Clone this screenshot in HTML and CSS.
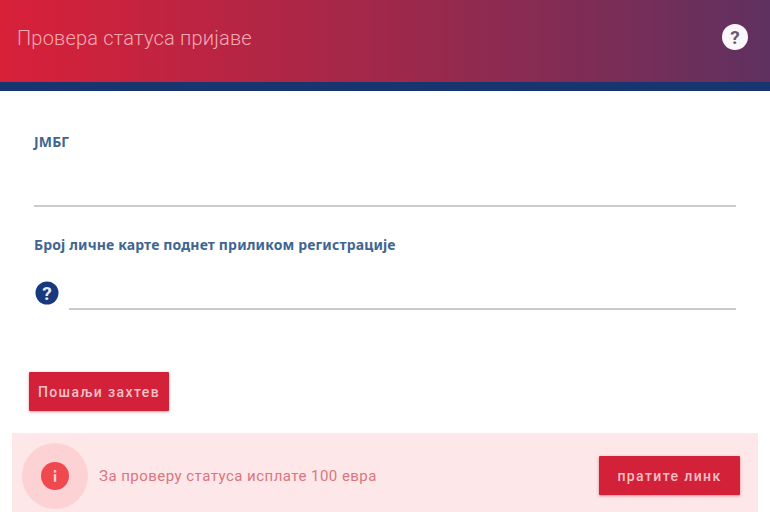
FILE: index.html
```html
<!DOCTYPE html>
<html lang="sr">
<head>
  <meta charset="UTF-8" />
  <meta name="viewport" content="width=device-width, initial-scale=1.0"/>
  <title>Провера статуса пријаве</title>
  <link rel="stylesheet" href="styles.css">
</head>
<body>

  <header class="topbar">
    <h1 class="topbar-title">Провера статуса пријаве</h1>
    <svg class="help-light" viewBox="0 0 26 26" aria-hidden="true">
      <circle cx="13" cy="13" r="13" fill="#fbf6fa"/>
      <text x="13" y="19.5" text-anchor="middle" class="help-mark" fill="#6b5a6c">?</text>
    </svg>
  </header>

  <main class="form">
    <div class="field field-jmbg">
      <label class="field-label">ЈМБГ</label>
      <div class="field-line"></div>
    </div>

    <div class="field field-card">
      <label class="field-label">Број личне карте поднет приликом регистрације</label>
      <div class="field-row">
        <svg class="help-dark" viewBox="0 0 24 24" aria-hidden="true">
          <circle cx="12" cy="12" r="11.5" fill="#17397f"/>
          <text x="12" y="18.5" text-anchor="middle" class="help-mark-small" fill="#e8edf6">?</text>
        </svg>
        <div class="field-line"></div>
      </div>
    </div>

    <button class="btn btn-submit">Пошаљи захтев</button>
  </main>

  <section class="notice">
    <div class="notice-icon">
      <div class="notice-dot">
        <svg viewBox="0 0 28 28" aria-hidden="true">
          <rect x="12.8" y="8" width="2.4" height="2.6" fill="#fbd0d0"/>
          <rect x="12.8" y="12.2" width="2.4" height="7.6" fill="#fbd0d0"/>
        </svg>
      </div>
    </div>
    <p class="notice-text">За проверу статуса исплате 100 евра</p>
    <button class="btn btn-link">пратите линк</button>
  </section>

</body>
</html>
```

FILE: styles.css
```css
:root {
  --red: #d3213a;
  --navy: #17397f;
  --label: #3f6690;
  --line: #cbcbcb;
}

html, body {
  margin: 0;
  height: 100%;
  overflow: hidden;
  background: #fff;
  font-family: Roboto, 'Noto Sans', sans-serif;
}

.topbar {
  height: 82px;
  border-bottom: 9px solid #17356f;
  padding: 0 22px 0 17px;
  display: flex;
  align-items: center;
  justify-content: space-between;
  background: linear-gradient(90deg, #d92039 0%, #a0284a 50%, #5f3160 100%);
}

.topbar-title {
  margin: 0 0 7px;
  font-size: 20px;
  font-weight: 300;
  letter-spacing: 0.2px;
  color: #f7a9b2;
}

.help-light {
  width: 26px;
  height: 26px;
  margin-bottom: 9px;
}

.help-mark {
  font: 700 19px Roboto, sans-serif;
}

.help-mark-small {
  font: 700 19px Roboto, sans-serif;
}

.form {
  padding: 43px 34px 0 29px;
}

.field {
  padding-left: 5px;
}

.field-label {
  display: block;
  font-family: 'Noto Sans', sans-serif;
  font-size: 14px;
  line-height: 16px;
  font-weight: 700;
  letter-spacing: 0.15px;
  color: var(--label);
}

.field-line {
  flex: 1;
  height: 2px;
  background: var(--line);
}

.field-jmbg .field-line {
  margin-top: 55px;
}

.field-card {
  margin-top: 30px;
}

.field-row {
  margin-top: 28px;
  display: flex;
  align-items: flex-end;
  gap: 10px;
}

.help-dark {
  width: 24px;
  height: 24px;
  margin: 0 0 5px 1px;
}

.btn {
  border: 0;
  border-radius: 1px;
  background: var(--red);
  color: #f6c0c6;
  font-family: Roboto, sans-serif;
  font-size: 14px;
  font-weight: 500;
  letter-spacing: 1.4px;
  box-shadow: 0 1px 3px rgba(150, 20, 40, 0.45);
}

.btn-submit {
  display: block;
  width: 140px;
  height: 39px;
  margin-top: 62px;
  padding: 0;
}

.notice {
  margin: 22px 12px 0 12px;
  height: 79px;
  padding: 10px 18px 0 10px;
  display: flex;
  align-items: flex-start;
  background: #fde7e9;
}

.notice-icon {
  width: 66px;
  height: 66px;
  flex: none;
  border-radius: 50%;
  background: #fcd2d5;
  display: flex;
  align-items: center;
  justify-content: center;
}

.notice-dot {
  width: 28px;
  height: 28px;
  border-radius: 50%;
  background: #f0484f;
}

.notice-dot svg {
  display: block;
}

.notice-text {
  margin: 0 0 0 11px;
  flex: 1;
  line-height: 67px;
  font-size: 15px;
  letter-spacing: 0.47px;
  color: #d9757f;
}

.btn-link {
  width: 141px;
  height: 39px;
  margin-top: 13px;
  padding: 0;
}
```
